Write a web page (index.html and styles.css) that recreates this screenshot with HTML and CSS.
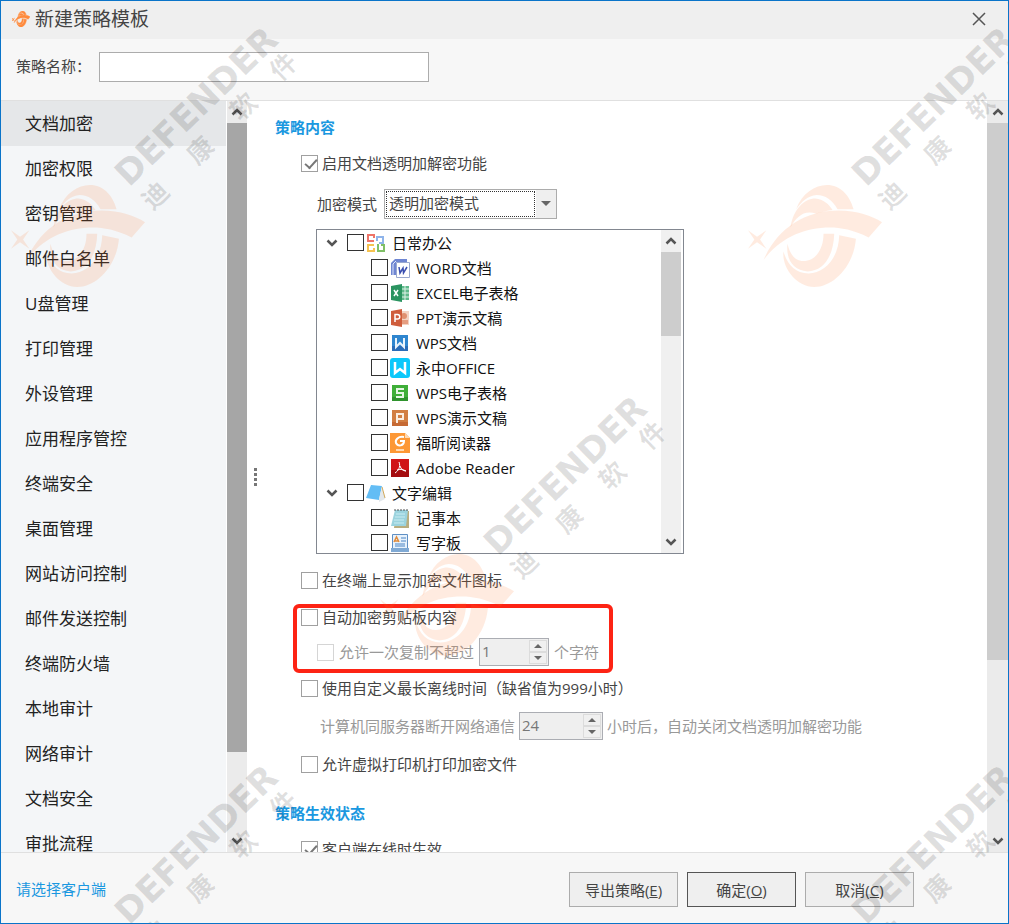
FILE: index.html
```
<!DOCTYPE html>
<html lang="zh-CN">
<head>
  <meta charset="UTF-8" />
  <title>新建策略模板</title>
  <link rel="stylesheet" href="styles.css">
</head>
<body>
  <div class="dialog">
    <header class="titlebar">
      <svg class="titlebar-logo" viewBox="144 555 401 307" preserveAspectRatio="none"><use href="#logo" x="144" y="555" width="401" height="307"/></svg>
      <h1>新建策略模板</h1>
      <button class="close" type="button" aria-label="关闭">
        <svg width="14" height="14" viewBox="0 0 14 14"><path d="M1 1L13 13M13 1L1 13" stroke="#555" stroke-width="1.500"/></svg>
      </button>
    </header>

    <div class="name-row">
      <label for="policy-name">策略名称：</label>
      <input type="text" id="policy-name">
    </div>

    <div class="main">
      <nav class="sidebar">
        <a href="#" class="selected">文档加密</a>
        <a href="#">加密权限</a>
        <a href="#">密钥管理</a>
        <a href="#">邮件白名单</a>
        <a href="#">U盘管理</a>
        <a href="#">打印管理</a>
        <a href="#">外设管理</a>
        <a href="#">应用程序管控</a>
        <a href="#">终端安全</a>
        <a href="#">桌面管理</a>
        <a href="#">网站访问控制</a>
        <a href="#">邮件发送控制</a>
        <a href="#">终端防火墙</a>
        <a href="#">本地审计</a>
        <a href="#">网络审计</a>
        <a href="#">文档安全</a>
        <a href="#">审批流程</a>
      </nav>
      <div class="scrollbar side-scroll">
        <svg class="arrow"><use href="#up"/></svg>
        <div class="track"><div class="thumb"></div></div>
        <svg class="arrow"><use href="#down"/></svg>
      </div>
      <div class="splitter"><i></i><i></i><i></i><i></i></div>

      <form class="content">
        <h2>策略内容</h2>
        <div class="check-row first">
          <input type="checkbox" id="enable" checked>
          <label for="enable">启用文档透明加解密功能</label>
        </div>
        <div class="mode-row">
          <label for="mode">加密模式</label>
          <div class="combo">
            <select id="mode"><option>透明加密模式</option></select>
          </div>
        </div>

        <div class="tree">
          <ul>
            <li class="group">
              <svg class="fold"><use href="#down"/></svg>
              <input type="checkbox" id="t0">
              <svg class="icon" viewBox="0 0 20 20" fill="none" stroke-width="2"><path d="M8 8H2V2H8V5" stroke="#ee7468"/><path d="M11 8V4H17V10H13" stroke="#8fb4ea"/><path d="M8 12H2V18H8V15" stroke="#f6c350"/><path d="M12 11V18H18V12H15" stroke="#7fbf66"/></svg>
              <label for="t0">日常办公</label>
            </li>
            <li>
              <input type="checkbox" id="t1">
              <svg class="icon" viewBox="0 0 20 20"><path d="M1 17V5L5 1H17V4H6V17Z" fill="#6f86d2"/><path d="M3 17V6L6 3" fill="none" stroke="#dfe6fb"/><path d="M6.500 4.500H19.500V19.500H6.500Z" fill="#fff" stroke="#9aa9cf"/><path d="M9 9L10 15L13 10L13.500 15L17 9" fill="none" stroke="#3a4fb0" stroke-width="1.500"/></svg>
              <label for="t1">WORD文档</label>
            </li>
            <li>
              <input type="checkbox" id="t2">
              <svg class="icon" viewBox="0 0 20 20"><path d="M10 3H19V17H10Z" fill="#5fb98b"/><path d="M11 6H19M11 10H19M11 14H19M15 3V17" stroke="#e0f2e8"/><path d="M1 3L12 1V19L1 17Z" fill="#2b9461"/><path d="M4 7L8 13M8 7L4 13" stroke="#fff" stroke-width="1.500"/></svg>
              <label for="t2">EXCEL电子表格</label>
            </li>
            <li>
              <input type="checkbox" id="t3">
              <svg class="icon" viewBox="0 0 20 20"><path d="M10 3H19V17H10Z" fill="#f3d3c4"/><circle cx="14" cy="8" r="3" fill="#e09070"/><path d="M12 13H18M12 15H18" stroke="#d8683f"/><path d="M1 3L12 1V19L1 17Z" fill="#cf5d3c"/><path d="M5 14V6.500H7.500A2 2 0 0 1 7.500 11H5" fill="none" stroke="#fff" stroke-width="1.500"/></svg>
              <label for="t3">PPT演示文稿</label>
            </li>
            <li>
              <input type="checkbox" id="t4">
              <svg class="icon" viewBox="0 0 20 20"><path d="M2 2H18V18H2Z" fill="#2f86cf"/><path d="M2 13H18V18H2Z" fill="#2a6cb8"/><path d="M6 5V14L10 10L14 14V5" fill="none" stroke="#e9f3fb" stroke-width="2"/></svg>
              <label for="t4">WPS文档</label>
            </li>
            <li>
              <input type="checkbox" id="t5">
              <svg class="icon" viewBox="0 0 20 20"><rect width="20" height="20" rx="3" fill="#0bc8fb"/><path d="M5 4V15L10 11L15 15V4" fill="none" stroke="#fff" stroke-width="2.500"/></svg>
              <label for="t5">永中OFFICE</label>
            </li>
            <li>
              <input type="checkbox" id="t6">
              <svg class="icon" viewBox="0 0 20 20"><path d="M2 2H18V18H2Z" fill="#3fae38"/><path d="M2 14H18V18H2Z" fill="#2f932d"/><path d="M14 6H7V10H13V14H6" fill="none" stroke="#e6f6e4" stroke-width="2"/></svg>
              <label for="t6">WPS电子表格</label>
            </li>
            <li>
              <input type="checkbox" id="t7">
              <svg class="icon" viewBox="0 0 20 20"><path d="M2 2H18V18H2Z" fill="#d27f43"/><path d="M2 14H18V18H2Z" fill="#c66a34"/><path d="M7 15V6H13V11H7" fill="none" stroke="#fbeee2" stroke-width="2"/></svg>
              <label for="t7">WPS演示文稿</label>
            </li>
            <li>
              <input type="checkbox" id="t8">
              <svg class="icon" viewBox="0 0 20 20"><path d="M0 0H15L20 5V20H0Z" fill="#fd9835"/><path d="M15 0L20 5H15Z" fill="#ffd9b0"/><path d="M14 4C8 3 5 7 6 10C8 14 14 13 14 8H10" fill="none" stroke="#fff" stroke-width="2"/><path d="M6 17H14" stroke="#ffd9b0" stroke-width="2"/></svg>
              <label for="t8">福昕阅读器</label>
            </li>
            <li>
              <input type="checkbox" id="t9">
              <svg class="icon" viewBox="0 0 20 20"><path d="M1 1H19V19H1Z" fill="#d01417"/><path d="M1 12H19V19H1Z" fill="#a50d10"/><path d="M9 4C11 9 8 13 5 15M10 8C11 11 13 13 16 13M7 12C10 11 12 11 16 13" fill="none" stroke="#fff"/></svg>
              <label for="t9">Adobe Reader</label>
            </li>
            <li class="group">
              <svg class="fold"><use href="#down"/></svg>
              <input type="checkbox" id="t10">
              <svg class="icon" viewBox="0 0 20 20"><path d="M5 2L16 3L13 17L0 15Z" fill="#63bdf5"/><path d="M16 3L19 16L13 19L13 16Z" fill="#e3e8ec"/><path d="M16 4L19 15" stroke="#d0a95a"/></svg>
              <label for="t10">文字编辑</label>
            </li>
            <li>
              <input type="checkbox" id="t11">
              <svg class="icon" viewBox="0 0 20 20"><path d="M6 3H19V20H4Z" fill="#b8ad80"/><path d="M5 2H18L16 18H1Z" fill="#9bd3de"/><path d="M6 6H15M5 9H15M4 12H14M4 15H14" stroke="#c9ecf2"/><path d="M5 1V3M8 1V3M11 1V3M14 1V3M17 1V3" stroke="#555"/></svg>
              <label for="t11">记事本</label>
            </li>
            <li>
              <input type="checkbox" id="t12">
              <svg class="icon" viewBox="0 0 20 20"><path d="M2.500 1.500H17.500V17.500H2.500Z" fill="#e7f2fc" stroke="#5f8fc4"/><path d="M4 9L6.500 4L9 9M5 8H8" fill="none" stroke="#e08a3a" stroke-width="1.500"/><path d="M11 5H16M11 8H16M5 11H15M5 13H15" stroke="#4b84c4"/><path d="M1 15H19V19H1Z" fill="#7fa9d4"/></svg>
              <label for="t12">写字板</label>
            </li>
          </ul>
          <div class="scrollbar tree-scroll">
            <svg class="arrow"><use href="#up"/></svg>
            <div class="track"><div class="thumb"></div></div>
            <svg class="arrow"><use href="#down"/></svg>
          </div>
        </div>

        <div class="check-row icon-row">
          <input type="checkbox" id="show-icon">
          <label for="show-icon">在终端上显示加密文件图标</label>
        </div>

        <div class="highlight">
          <div class="check-row">
            <input type="checkbox" id="clipboard">
            <label for="clipboard">自动加密剪贴板内容</label>
          </div>
          <div class="spin-row disabled">
            <input type="checkbox" id="copy-limit" disabled>
            <label for="copy-limit">允许一次复制不超过</label>
            <div class="spin">
              <input type="number" value="1" aria-label="字符数" disabled>
              <div class="spin-buttons">
                <button type="button" class="spin-up" aria-label="增加" disabled></button>
                <button type="button" class="spin-down" aria-label="减少" disabled></button>
              </div>
            </div>
            <span>个字符</span>
          </div>
        </div>

        <div class="check-row">
          <input type="checkbox" id="offline">
          <label for="offline">使用自定义最长离线时间（缺省值为999小时）</label>
        </div>
        <div class="spin-row offline-spin disabled">
          <label for="hours">计算机同服务器断开网络通信</label>
          <div class="spin wide">
            <input type="number" id="hours" value="24" disabled>
            <div class="spin-buttons">
              <button type="button" class="spin-up" aria-label="增加" disabled></button>
              <button type="button" class="spin-down" aria-label="减少" disabled></button>
            </div>
          </div>
          <span>小时后，自动关闭文档透明加解密功能</span>
        </div>
        <div class="check-row">
          <input type="checkbox" id="printer">
          <label for="printer">允许虚拟打印机打印加密文件</label>
        </div>

        <h2 class="state">策略生效状态</h2>
        <div class="check-row online-row">
          <input type="checkbox" id="online" checked>
          <label for="online">客户端在线时生效</label>
        </div>
      </form>
      <div class="scrollbar content-scroll">
        <svg class="arrow"><use href="#up"/></svg>
        <div class="track"><div class="thumb"></div></div>
        <svg class="arrow"><use href="#down"/></svg>
      </div>
    </div>

    <footer class="footer">
      <a href="#">请选择客户端</a>
      <button type="button">导出策略(<u>E</u>)</button>
      <button type="button" class="default">确定(<u>O</u>)</button>
      <button type="button">取消(<u>C</u>)</button>
    </footer>

    <svg class="watermark" aria-hidden="true">
      <defs>
        <symbol id="logo" viewBox="144 555 401 307" preserveAspectRatio="none">
          <path d="M288 628C305 580 345 555 380 555C420 555 448 585 460 628L412 628C397 600 375 585 350 585C322 587 305 605 288 628Z"/>
          <path d="M271 683C280 625 315 596 345 596C370 597 387 615 397 630C375 633 360 638 348 641C310 630 290 650 271 683Z"/>
          <path d="M191 780C230 690 310 632 415 632C470 632 515 648 545 667L505 713C460 690 420 683 390 683C310 683 240 715 191 780Z"/>
          <path d="M370 702L402 702C400 770 370 814 322 815C280 812 257 780 262 732C270 765 285 784 310 784C345 784 370 750 370 702Z"/>
          <path d="M417 706L467 717C460 800 400 862 342 862C290 862 245 805 250 755C262 795 285 821 325 821C375 820 415 775 417 706Z"/>
          <path d="M144 691L171 711L199 691L180 719L199 747L171 727L144 747L163 719Z"/>
        </symbol>
        <symbol id="up" viewBox="0 0 12 8"><path d="M1.500 6.500L6 2L10.500 6.500" fill="none" stroke="#555" stroke-width="2.500"/></symbol>
        <symbol id="down" viewBox="0 0 12 8"><path d="M1.500 1.500L6 6L10.500 1.500" fill="none" stroke="#555" stroke-width="2.500"/></symbol>
      </defs>
      <g id="stamp">
        <use href="#logo" x="11" y="185" width="134" height="102" class="stamp-logo"/>
        <text class="stamp-text stamp-en" transform="translate(129 188) rotate(-44)">DEFENDER</text>
        <g class="stamp-text stamp-cn">
          <text transform="translate(155 195) rotate(-44)">迪</text>
          <text transform="translate(200 150) rotate(-44)">康</text>
          <text transform="translate(243 106) rotate(-44)">软</text>
          <text transform="translate(283 66) rotate(-44)">件</text>
        </g>
      </g>
      <use href="#stamp" x="737"/>
      <use href="#stamp" x="369" y="369"/>
      <use href="#stamp" y="738"/>
      <use href="#stamp" x="737" y="738"/>
    </svg>
  </div>
</body>
</html>
```
FILE: styles.css
```
* { box-sizing: border-box; }

body {
  margin: 0;
  font-family: "Open Sans", "Noto Sans CJK SC", sans-serif;
  font-size: 15px;
  line-height: 20px;
  color: #444;
}

input, select, button {
  font-family: inherit;
  font-size: 15px;
  color: inherit;
  margin: 0;
  padding: 0;
  border-radius: 0;
}

.dialog {
  position: relative;
  display: flex;
  flex-direction: column;
  height: 100vh;
  border: 1px solid #0a74c9;
  background: #f7f7f7;
  overflow: hidden;
}

.titlebar {
  display: flex;
  align-items: center;
  height: 38px;
  padding: 0 22px 2px 11px;
  background: #efefef;
}

.titlebar-logo {
  width: 18px;
  height: 16px;
  fill: #ff8a3c;
  stroke: #ff8a3c;
  stroke-width: 8;
}

.titlebar h1 {
  flex: 1;
  margin: 0 0 0 5px;
  font-size: 19px;
  font-weight: normal;
}

.close {
  display: flex;
  border: none;
  background: none;
}

.name-row {
  display: flex;
  align-items: center;
  height: 62px;
  padding: 0 0 6px 15px;
  border-bottom: 1px solid #e0e0e0;
}

.name-row label { padding-bottom: 2px; }

.name-row input {
  width: 330px;
  height: 30px;
  margin-left: 8px;
  border: 1px solid #acacac;
  background: #fff;
}

.main {
  flex: 1;
  min-height: 0;
  display: flex;
  overflow: hidden;
  background: #fff;
}

/* left menu */
.sidebar {
  width: 225px;
  background: #f4f6f8;
}

.sidebar a {
  display: flex;
  align-items: center;
  height: 45px;
  padding-left: 24px;
  font-size: 17px;
  color: #222;
  text-decoration: none;
}

.sidebar .selected { background: #e5e7e9; }

/* scrollbars */
.scrollbar {
  display: flex;
  flex-direction: column;
  width: 20px;
  background: #ebebeb;
}

.arrow {
  width: 12px;
  height: 22px;
  margin: 0 auto;
}

.track { flex: 1; }

.thumb { background: #cdcdcd; }

.side-scroll { margin-left: 1px; }
.side-scroll .thumb { height: 89%; background: #a6a6a6; }
.content-scroll { width: 21px; }
.content-scroll .thumb { height: 76%; }
.tree-scroll { margin-right: 2px; background: #f0f0f0; }
.tree-scroll .thumb { height: 30%; }

.splitter {
  display: flex;
  flex-direction: column;
  justify-content: center;
  align-items: center;
  gap: 2px;
  width: 16px;
}

.splitter i {
  width: 3px;
  height: 3px;
  background: #777;
}

/* right side */
.content {
  flex: 1;
  min-width: 0;
  padding: 16px 0 0 12px;
}

.content h2 {
  margin: 0;
  font-size: 15px;
  line-height: 20px;
  color: #1b98e0;
}

.content label, .content span { white-space: nowrap; }

input[type="checkbox"] {
  appearance: none;
  flex: none;
  width: 17px;
  height: 17px;
  border: 1px solid #a0a0a0;
  background: #fff;
}

input[type="checkbox"]:checked::before {
  content: "";
  display: block;
  width: 10px;
  height: 5px;
  margin: 3px 0 0 3px;
  border: solid #777;
  border-width: 0 0 2px 2px;
  transform: rotate(-48deg);
}

.check-row {
  display: flex;
  align-items: center;
  gap: 4px;
  height: 20px;
  margin-left: 26px;
}

.first { margin-top: 16px; }

.mode-row {
  display: flex;
  align-items: center;
  gap: 7px;
  margin: 16px 0 10px 42px;
}

.combo {
  position: relative;
  width: 173px;
  height: 30px;
  border: 1px solid #acacac;
  background: #fff;
}

.combo select {
  appearance: none;
  width: 100%;
  height: 100%;
  padding: 0 24px 2px 4px;
  border: none;
  background: linear-gradient(#efefef, #efefef) right / 20px 100% no-repeat;
}

.combo::before {
  content: "";
  position: absolute;
  inset: 1px 21px 1px 1px;
  border: 1px dotted #333;
  pointer-events: none;
}

.combo::after {
  content: "";
  position: absolute;
  top: 11px;
  right: 5px;
  border: 5px solid transparent;
  border-top-color: #666;
  border-bottom: none;
  pointer-events: none;
}

.tree {
  display: flex;
  width: 368px;
  height: 325px;
  margin-left: 41px;
  border: 1px solid #828790;
  overflow: hidden;
}

.tree ul {
  flex: 1;
  margin: 0;
  padding: 0;
  list-style: none;
}

.tree li {
  display: flex;
  align-items: center;
  height: 25px;
  padding-left: 54px;
  color: #111;
}

.tree .group { padding-left: 9px; }

.tree input[type="checkbox"] { border-color: #333; }

.fold {
  width: 12px;
  height: 8px;
  margin-right: 9px;
}

.icon {
  width: 20px;
  height: 20px;
  margin: 0 6px 0 2px;
}

.icon-row { margin-top: 16px; }

.highlight {
  width: 320px;
  margin: 14px 0 5px 18px;
  padding-bottom: 3px;
  border: 4px solid #fd2314;
  border-radius: 6px;
}

.highlight .check-row {
  height: 18px;
  margin: 0 0 12px 4px;
}

.spin-row {
  display: flex;
  align-items: center;
  gap: 5px;
  margin-left: 20px;
}

.disabled { color: #999; }

.disabled input[type="checkbox"] { border-color: #d5d5d5; }

.spin {
  display: flex;
  width: 70px;
  height: 28px;
  padding: 1px;
  border: 1px solid #abadb3;
  background: #efefef;
}

.wide { width: 84px; }

.spin input {
  flex: 1;
  min-width: 0;
  padding: 0 0 2px 1px;
  border: none;
  background: none;
  color: #777;
  appearance: textfield;
}

.spin input::-webkit-inner-spin-button { appearance: none; }

.spin-buttons {
  display: flex;
  flex-direction: column;
  width: 18px;
}

.spin-buttons button {
  display: flex;
  flex: 1;
  align-items: center;
  justify-content: center;
  border: 1px solid #dcdcdc;
  background: #f0f0f0;
}

.spin-buttons button::before {
  content: "";
  border: 4px solid transparent;
}

.spin-buttons .spin-up::before {
  border-top: none;
  border-bottom-color: #666;
}

.spin-buttons .spin-down::before {
  border-bottom: none;
  border-top-color: #666;
}

.offline-spin {
  margin: 14px 0 14px 45px;
  gap: 4px;
}

.content .state { margin-top: 29px; }

.online-row { margin-top: 16px; }

/* bottom bar */
.footer {
  display: flex;
  align-items: center;
  gap: 9px;
  height: 71px;
  padding: 2px 94px 0 15px;
  border-top: 1px solid #e0e0e0;
}

.footer a {
  margin-right: auto;
  color: #1b98e0;
  text-decoration: none;
}

.footer button {
  width: 109px;
  height: 35px;
  border: 1px solid #acacac;
  background: #efefef;
}

.footer .default { border-color: #555; }

.watermark {
  position: absolute;
  inset: -1px;
  width: calc(100% + 2px);
  height: calc(100% + 2px);
  pointer-events: none;
}

.stamp-logo { fill: #ff7020; fill-opacity: 0.14; }

.stamp-text { fill: #000; fill-opacity: 0.12; }

.stamp-en {
  font-family: "DejaVu Sans", sans-serif;
  font-size: 35px;
  font-weight: bold;
}

.stamp-cn {
  font-size: 26px;
  font-weight: bold;
  text-anchor: middle;
  dominant-baseline: central;
}
```
